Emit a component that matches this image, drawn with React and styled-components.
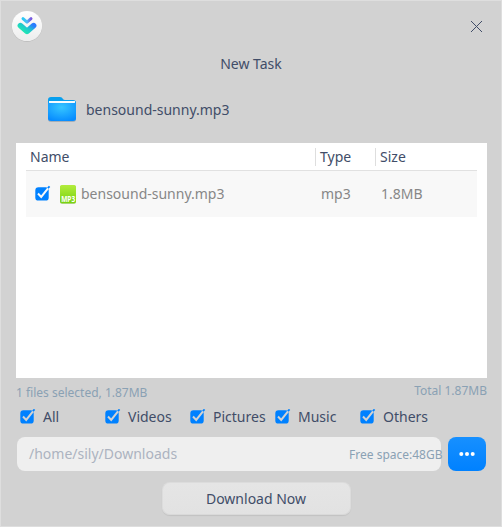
import React from "react";
import styled, { createGlobalStyle } from "styled-components";

const GlobalStyle = createGlobalStyle`
  * { box-sizing: border-box; }
  html, body { margin: 0; padding: 0; overflow: hidden; }
  body { font-family: "Noto Sans", sans-serif; font-size: 14px; color: #414d68; }
  button, input { font: inherit; color: inherit; }
`;

const Dialog = styled.main`
  display: flex;
  flex-direction: column;
  width: 502px;
  height: 527px;
  border: 1px solid #dedede;
  background: #d2d2d2;
`;

const TitleBar = styled.header`
  display: flex;
  justify-content: space-between;
  height: 51px;
  padding: 7px 17px 0 7px;
`;

const CloseButton = styled.button`
  display: flex;
  width: 14px;
  height: 14px;
  margin-top: 12px;
  padding: 0;
  border: 0;
  background: none;
`;

const Title = styled.h1`
  height: 24px;
  margin: 0;
  font-size: 14px;
  font-weight: 400;
  line-height: 24px;
  text-align: center;
`;

const TaskName = styled.div`
  display: flex;
  align-items: center;
  gap: 9px;
  height: 34px;
  margin-top: 17px;
  padding-left: 46px;
`;

const Label = styled.span`
  line-height: 20px;
  white-space: nowrap;
`;

const FileTable = styled.section`
  width: 471px;
  height: 235px;
  margin: 16px 0 0 15px;
  padding: 0 10px;
  background: #fff;
`;

const Columns = styled.div`
  display: grid;
  grid-template-columns: 289px 60px 102px;
  align-items: center;
`;

const HeaderRow = styled(Columns)`
  height: 28px;
  border-bottom: 1px solid #e1e1e1;
`;

const HeaderCell = styled.div`
  height: 18px;
  padding-left: 4px;
  border-left: ${({ $divided }) => ($divided ? "1px solid #dedede" : "0")};
  line-height: 18px;
`;

const FileRow = styled(Columns)`
  height: 46px;
  background: #f8f8f8;
  color: #878787;
`;

const FileCell = styled.div`
  display: flex;
  align-items: center;
  padding-left: ${({ $inset }) => $inset}px;
  line-height: 20px;
`;

const Summary = styled.div`
  display: flex;
  justify-content: space-between;
  height: 24px;
  margin: 4px 14px 0 15px;
  color: #8aa1b4;
  font-size: 12px;
`;

const SummaryText = styled.span`
  line-height: 17px;
  padding-top: ${({ $drop }) => $drop}px;
`;

const Filters = styled.div`
  display: grid;
  grid-template-columns: repeat(5, 85px);
  height: 24px;
  margin-top: 1px;
  padding-left: 18px;
`;

const Filter = styled.label`
  display: flex;
  align-items: center;
  gap: 7px;
  height: 20px;
`;

const PathRow = styled.div`
  display: flex;
  gap: 7px;
  height: 34px;
  margin: 6px 15px 0 16px;
`;

const PathField = styled.div`
  display: flex;
  align-items: center;
  justify-content: space-between;
  width: 424px;
  padding-left: 12px;
  border-radius: 8px;
  background: #efefef;
  color: #acb3c0;
`;

const FreeSpace = styled.span`
  margin-right: -1.5px;
  color: #8aa1b4;
  font-size: 12px;
  white-space: nowrap;
`;

const BrowseButton = styled.button`
  display: grid;
  place-items: center;
  width: 38px;
  padding: 0;
  border: 0;
  border-radius: 8px;
  background: linear-gradient(#1790ff, #0081ff);
`;

const DownloadButton = styled.button`
  align-self: center;
  width: 189px;
  height: 33px;
  margin: 11px 0 0 11px;
  padding: 0 1px 0 0;
  border: 1px solid #dcdcdc;
  border-bottom-color: #d9d9d9;
  border-radius: 8px;
  background: linear-gradient(#e5e5e5, #e2e2e2);
  box-shadow: 0 1px 1px rgba(0, 0, 0, 0.08);
  line-height: 31px;
`;

const Logo = () => (
  <svg width="36" height="36" viewBox="0 0 36 36">
    <defs>
      <linearGradient id="disc" x2="0" y2="1"><stop stopColor="#fff" /><stop offset="1" stopColor="#ededed" /></linearGradient>
      <linearGradient id="small" x1="0" x2="1"><stop stopColor="#28c9f5" /><stop offset=".5" stopColor="#4fbff5" /><stop offset="1" stopColor="#7a55df" /></linearGradient>
      <linearGradient id="large" x1="0" y1=".6" x2="1" y2="0"><stop stopColor="#20e4b5" /><stop offset=".5" stopColor="#20c5cf" /><stop offset="1" stopColor="#2a7cff" /></linearGradient>
    </defs>
    <circle cx="19" cy="18.6" r="15.2" fill="#b9b9b9" />
    <circle cx="19" cy="18" r="15.1" fill="url(#disc)" />
    <path d="M15 10.7 19 14.2 23 10.7" fill="none" stroke="url(#small)" strokeWidth="3" strokeLinecap="round" strokeLinejoin="round" />
    <path d="M12.4 17.6 19 23.4 25.6 17.6" fill="none" stroke="url(#large)" strokeWidth="5.6" strokeLinecap="round" strokeLinejoin="round" />
  </svg>
);

const Folder = () => (
  <svg width="30" height="28" viewBox="0 0 30 28">
    <defs>
      <radialGradient id="folder" cx=".48" cy=".28" r=".75"><stop stopColor="#36c6ff" /><stop offset="1" stopColor="#078cff" /></radialGradient>
    </defs>
    <path d="M1 5Q1 2 4 2H13Q15 2 16 4Q16.5 5 18 5H26Q29 5 29 8V23Q29 26 26 26H4Q1 26 1 23Z" fill="#a5aeb6" />
    <path d="M1 4Q1 1 4 1H13Q15 1 16 3Q16.5 4 18 4H26Q29 4 29 7V22H1Z" fill="#079fee" />
    <path d="M2 5H28V10H2Z" fill="#f5fcff" />
    <path d="M1 6Q1 7 3 7H27Q29 7 29 6V22.5Q29 25 26 25H4Q1 25 1 22.5Z" fill="url(#folder)" />
  </svg>
);

const Checkbox = ({ tick = "#d2d2d2" }) => (
  <svg width="17" height="17" viewBox="0 0 17 17">
    <rect x="1.3" y="1.2" width="13.4" height="13.4" rx="3.2" fill="#0081ff" />
    <path d="M4 7.5 7.2 10.9 15 1.2" fill="none" stroke={tick} strokeWidth="2" />
    <path d="M13.8 2.2 15.6 .4" stroke="#0081ff" strokeWidth="1.8" />
  </svg>
);

const Mp3Icon = () => (
  <svg width="17" height="20" viewBox="0 0 17 20">
    <defs>
      <linearGradient id="mp3" x2="0" y2="1"><stop stopColor="#b3ec3d" /><stop offset="1" stopColor="#78d30e" /></linearGradient>
    </defs>
    <rect y="1.5" width="16" height="18.2" rx="2" fill="#8ec94a" />
    <rect y="1" width="16" height="18" rx="2" fill="url(#mp3)" />
    <text x="1.2" y="17.8" textLength="14" lengthAdjust="spacingAndGlyphs" fill="#fff" fontFamily="Noto Sans, sans-serif" fontSize="9" fontWeight="700">MP3</text>
  </svg>
);

const FileInfo = styled(FileCell)`
  gap: 9px;

  svg { overflow: visible; }
`;

const FileName = styled(Label)`
  margin-left: -5px;
`;

const filters = ["All", "Videos", "Pictures", "Music", "Others"];

export default function App() {
  return (
    <>
      <GlobalStyle />
      <Dialog>
        <TitleBar>
          <Logo />
          <CloseButton aria-label="Close">
            <svg width="14" height="14" viewBox="0 0 14 14"><path d="M1 1 12 12M12 1 1 12" stroke="#414d68" fill="none" /></svg>
          </CloseButton>
        </TitleBar>
        <Title>New Task</Title>
        <TaskName><Folder /><Label>bensound-sunny.mp3</Label></TaskName>
        <FileTable>
          <HeaderRow>
            <HeaderCell>Name</HeaderCell>
            <HeaderCell $divided>Type</HeaderCell>
            <HeaderCell $divided>Size</HeaderCell>
          </HeaderRow>
          <FileRow>
            <FileInfo $inset={8}><Checkbox tick="#f8f8f8" /><Mp3Icon /><FileName>bensound-sunny.mp3</FileName></FileInfo>
            <FileCell $inset={6}>mp3</FileCell>
            <FileCell $inset={6}>1.8MB</FileCell>
          </FileRow>
        </FileTable>
        <Summary>
          <SummaryText $drop={2}>1 files selected, 1.87MB</SummaryText>
          <SummaryText $drop={0}>Total 1.87MB</SummaryText>
        </Summary>
        <Filters>
          {filters.map((name) => <Filter key={name}><Checkbox /><Label>{name}</Label></Filter>)}
        </Filters>
        <PathRow>
          <PathField><Label>/home/sily/Downloads</Label><FreeSpace>Free space:48GB</FreeSpace></PathField>
          <BrowseButton aria-label="Browse">
            <svg width="18" height="6" viewBox="0 0 18 6" fill="#fff"><circle cx="3.3" cy="3" r="2" /><circle cx="9" cy="3" r="2" /><circle cx="14.7" cy="3" r="2" /></svg>
          </BrowseButton>
        </PathRow>
        <DownloadButton>Download Now</DownloadButton>
      </Dialog>
    </>
  );
}
